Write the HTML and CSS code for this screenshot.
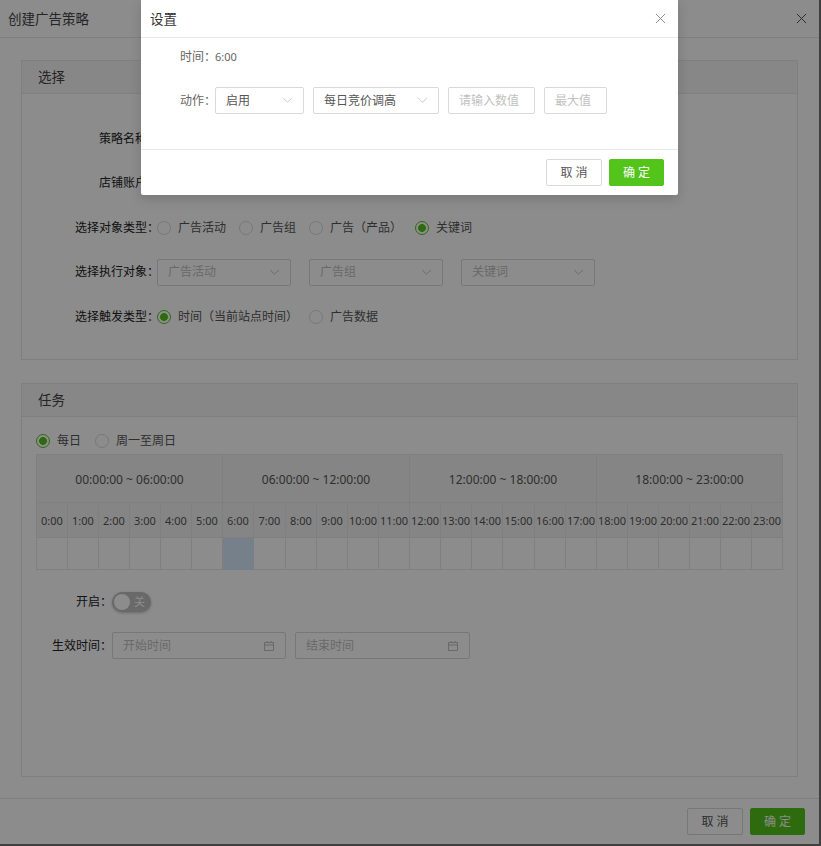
FILE: index.html
```html
<!DOCTYPE html>
<html lang="zh-CN">
<head>
<meta charset="utf-8">
<title>创建广告策略</title>
<link rel="stylesheet" href="styles.css">
</head>
<body>
<div class="panel">
  <header class="panel-head">
    <span class="panel-title">创建广告策略</span>
    <svg class="close close-outer" viewBox="0 0 12 12"><path d="M1 1l10 10M11 1L1 11"/></svg>
  </header>
  <main class="panel-body">
    <section class="card card-select">
      <h2 class="card-head">选择</h2>
      <div class="card-body form">
        <div class="row"><span class="label">策略名称：</span></div>
        <div class="row"><span class="label">店铺账户：</span></div>
        <div class="row">
          <span class="label">选择对象类型：</span>
          <span class="radio"><i class="dot"></i>广告活动</span>
          <span class="radio"><i class="dot"></i>广告组</span>
          <span class="radio"><i class="dot"></i>广告（产品）</span>
          <span class="radio"><i class="dot on"></i>关键词</span>
        </div>
        <div class="row">
          <span class="label">选择执行对象：</span>
          <span class="select s-target muted">广告活动<svg class="chev" viewBox="0 0 12 8"><path d="M1 1l5 5 5-5"/></svg></span>
          <span class="select s-target muted">广告组<svg class="chev" viewBox="0 0 12 8"><path d="M1 1l5 5 5-5"/></svg></span>
          <span class="select s-target muted">关键词<svg class="chev" viewBox="0 0 12 8"><path d="M1 1l5 5 5-5"/></svg></span>
        </div>
        <div class="row row-trigger">
          <span class="label">选择触发类型：</span>
          <span class="radio"><i class="dot on"></i>时间（当前站点时间）</span>
          <span class="radio"><i class="dot"></i>广告数据</span>
        </div>
      </div>
    </section>
    <section class="card card-task">
      <h2 class="card-head">任务</h2>
      <div class="card-body task">
        <div class="freq">
          <span class="radio"><i class="dot on"></i>每日</span>
          <span class="radio"><i class="dot"></i>周一至周日</span>
        </div>
        <div class="sched">
          <div class="range">00:00:00 ~ 06:00:00</div>
          <div class="range">06:00:00 ~ 12:00:00</div>
          <div class="range">12:00:00 ~ 18:00:00</div>
          <div class="range">18:00:00 ~ 23:00:00</div>
          <div class="hour">0:00</div><div class="hour">1:00</div><div class="hour">2:00</div><div class="hour">3:00</div><div class="hour">4:00</div><div class="hour">5:00</div><div class="hour">6:00</div><div class="hour">7:00</div><div class="hour">8:00</div><div class="hour">9:00</div><div class="hour">10:00</div><div class="hour">11:00</div><div class="hour">12:00</div><div class="hour">13:00</div><div class="hour">14:00</div><div class="hour">15:00</div><div class="hour">16:00</div><div class="hour">17:00</div><div class="hour">18:00</div><div class="hour">19:00</div><div class="hour">20:00</div><div class="hour">21:00</div><div class="hour">22:00</div><div class="hour">23:00</div>
          <div class="slot"></div><div class="slot"></div><div class="slot"></div><div class="slot"></div><div class="slot"></div><div class="slot"></div><div class="slot picked"></div><div class="slot"></div><div class="slot"></div><div class="slot"></div><div class="slot"></div><div class="slot"></div><div class="slot"></div><div class="slot"></div><div class="slot"></div><div class="slot"></div><div class="slot"></div><div class="slot"></div><div class="slot"></div><div class="slot"></div><div class="slot"></div><div class="slot"></div><div class="slot"></div><div class="slot"></div>
        </div>
        <div class="opt-row switch-row">
          <span class="opt-label">开启：</span>
          <span class="switch"><i class="knob"></i><span class="switch-text">关</span></span>
        </div>
        <div class="opt-row date-row">
          <span class="opt-label">生效时间：</span>
          <span class="date">开始时间<svg class="cal" viewBox="0 0 12 12"><path d="M1.5 2.5h9v8h-9zM1.5 5h9M4 1v2M8 1v2"/></svg></span>
          <span class="date">结束时间<svg class="cal" viewBox="0 0 12 12"><path d="M1.5 2.5h9v8h-9zM1.5 5h9M4 1v2M8 1v2"/></svg></span>
        </div>
      </div>
    </section>
  </main>
  <footer class="panel-foot">
    <button class="btn">取 消</button>
    <button class="btn primary">确 定</button>
  </footer>
</div>
<div class="mask"></div>
<div class="dialog">
  <header class="dialog-head">
    <span class="dialog-title">设置</span>
    <svg class="close close-inner" viewBox="0 0 12 12"><path d="M1 1l10 10M11 1L1 11"/></svg>
  </header>
  <div class="dialog-body">
    <div class="d-time"><span class="d-label">时间：</span><span class="d-value">6:00</span></div>
    <div class="d-action">
      <span class="d-label">动作：</span>
      <span class="select s-state">启用<svg class="chev" viewBox="0 0 12 8"><path d="M1 1l5 5 5-5"/></svg></span>
      <span class="select s-kind">每日竞价调高<svg class="chev" viewBox="0 0 12 8"><path d="M1 1l5 5 5-5"/></svg></span>
      <span class="input i-val">请输入数值</span>
      <span class="input i-max">最大值</span>
    </div>
  </div>
  <footer class="dialog-foot">
    <button class="btn">取 消</button>
    <button class="btn primary">确 定</button>
  </footer>
</div>
</body>
</html>
```
FILE: styles.css
```css
* { box-sizing: border-box; }
html, body { margin: 0; height: 100%; }
body {
  width: 821px;
  height: 846px;
  overflow: hidden;
  background: #737373;
  color: #555;
  font: 12px/1.5 "Noto Sans", "Noto Sans CJK SC", sans-serif;
}
.panel {
  width: 819px;
  height: 844px;
  background: #fff;
  display: flex;
  flex-direction: column;
}
.panel-head {
  height: 38px;
  flex: none;
  padding: 0 12px 0 8px;
  display: flex;
  align-items: center;
  justify-content: space-between;
  border-bottom: 1px solid #e8e8e8;
}
.panel-title { font-size: 13.5px; color: #444; position: relative; top: 1px; }
.close { fill: none; stroke-width: 1; }
.close path { vector-effect: non-scaling-stroke; }
.close-outer { width: 11px; height: 11px; stroke: #555; }
.panel-body { flex: 1; padding: 22px 21px 0; display: flex; flex-direction: column; gap: 23px; }
.card { width: 777px; border: 1px solid #e8e8e8; }
.card-select { height: 300px; }
.card-task { height: 394px; }
.card-head {
  margin: 0;
  height: 33px;
  padding: 0 16px;
  line-height: 33px;
  font-size: 13.5px;
  font-weight: 400;
  color: #444;
  background: #f6f6f6;
  border-bottom: 1px solid #e8e8e8;
}
.form { padding-top: 31.5px; display: flex; flex-direction: column; gap: 17.45px; }
.row { height: 27px; display: flex; align-items: center; }
.label { width: 137px; margin-right: -2px; text-align: right; color: #222; flex: none; }
.radio { display: inline-flex; align-items: center; gap: 7px; margin-right: 13px; }
.row-trigger .radio { margin-right: 11px; }
.dot {
  width: 14px;
  height: 14px;
  flex: none;
  border: 1px solid #d9d9d9;
  border-radius: 50%;
  background: #fff;
  display: block;
}
.dot.on { border-color: #52c41a; background: radial-gradient(circle, #52c41a 0 3.6px, #fff 4.2px); }
.select, .input, .date {
  height: 27px;
  display: inline-flex;
  align-items: center;
  border: 1px solid #d9d9d9;
  border-radius: 2px;
  background: #fff;
  flex: none;
}
.select { justify-content: space-between; padding: 0 10px; }
.muted, .input, .date { color: #bfbfbf; }
.chev { width: 11px; height: 7px; fill: none; stroke: #bfbfbf; stroke-width: 1; }
.s-target { width: 134px; margin-right: 18px; }
.task { padding: 14px 14px 0; }
.freq { height: 20px; display: flex; align-items: center; }
.freq .radio { margin-right: 14px; }
.sched {
  width: 747px;
  margin-top: 3px;
  display: grid;
  grid-template-columns: repeat(7, 31px) 32px repeat(7, 31px) 32px repeat(8, 31px);
  grid-template-rows: 48px 35px 32px;
  border-top: 1px solid #e8e8e8;
  border-left: 1px solid #e8e8e8;
}
.range, .hour, .slot { border-right: 1px solid #e8e8e8; border-bottom: 1px solid #e8e8e8; }
.range {
  grid-column: span 6;
  background: #f3f3f3;
  display: flex;
  align-items: center;
  justify-content: center;
  padding-top: 2px;
  color: #555;
}
.hour {
  background: #f3f3f3;
  display: flex;
  align-items: center;
  justify-content: center;
  padding-top: 2px;
  white-space: nowrap;
  font-size: 11px;
}
.slot.picked { background: #d8eafe; border-color: #d8eafe; }
.opt-row { display: flex; align-items: center; }
.opt-label { width: 76px; flex: none; text-align: right; color: #222; }
.switch-row { margin-top: 22px; height: 20px; }
.date-row { margin-top: 20px; height: 27px; gap: 9px; }
.date-row .opt-label { margin-right: -9px; }
.switch {
  width: 39px;
  height: 20px;
  border-radius: 10px;
  background: #bfbfbf;
  display: flex;
  align-items: center;
  padding: 0 2px;
  box-shadow: 0 1px 3px rgba(0,0,0,.25);
}
.knob { width: 16px; height: 16px; border-radius: 50%; background: #fff; flex: none; }
.switch-text { color: #fff; margin-left: 4px; font-size: 11px; }
.date { width: 174px; padding: 1px 10px 0; justify-content: space-between; }
.date + .date { width: 175px; }
.cal { width: 12px; height: 12px; fill: none; stroke: #bfbfbf; stroke-width: 1; }
.panel-foot {
  height: 46px;
  flex: none;
  margin-top: 21px;
  border-top: 1px solid #e8e8e8;
  padding: 9px 14px 0 0;
  display: flex;
  justify-content: flex-end;
  gap: 7px;
}
.btn {
  width: 56px;
  height: 27px;
  padding: 0;
  border: 1px solid #d9d9d9;
  border-radius: 2px;
  background: #fff;
  color: #555;
  font: inherit;
}
.btn.primary { width: 55px; border-color: #52c41a; background: #52c41a; color: #fff; }
.mask { position: absolute; inset: 0; background: rgba(0,0,0,.45); }
.dialog {
  position: absolute;
  left: 141px;
  top: 0;
  width: 537px;
  height: 195px;
  background: #fff;
  border-radius: 0 0 2px 2px;
  box-shadow: 0 4px 12px rgba(0,0,0,.15);
  display: flex;
  flex-direction: column;
}
.dialog-head {
  height: 38px;
  flex: none;
  padding: 0 12px 0 9px;
  display: flex;
  align-items: center;
  justify-content: space-between;
  border-bottom: 1px solid #e8e8e8;
}
.dialog-title { font-size: 13.5px; color: #333; position: relative; top: 1px; }
.close-inner { width: 11px; height: 11px; stroke: #8c8c8c; }
.dialog-body { flex: 1; padding: 10px 0 0 39px; }
.d-time { height: 18px; color: #666; display: flex; align-items: center; }
.d-label { color: #666; width: 35px; flex: none; white-space: nowrap; }
.d-value { font-size: 11px; }
.d-action { margin-top: 21px; display: flex; align-items: center; }
.s-state { width: 89px; margin-right: 9px; }
.s-kind { width: 126px; margin-right: 9px; }
.input { padding: 0 10px; }
.i-val { width: 87px; margin-right: 9px; }
.i-max { width: 63px; }
.dialog-foot {
  height: 46px;
  flex: none;
  border-top: 1px solid #e8e8e8;
  padding: 9px 14px 0 0;
  display: flex;
  justify-content: flex-end;
  gap: 7px;
}
```
